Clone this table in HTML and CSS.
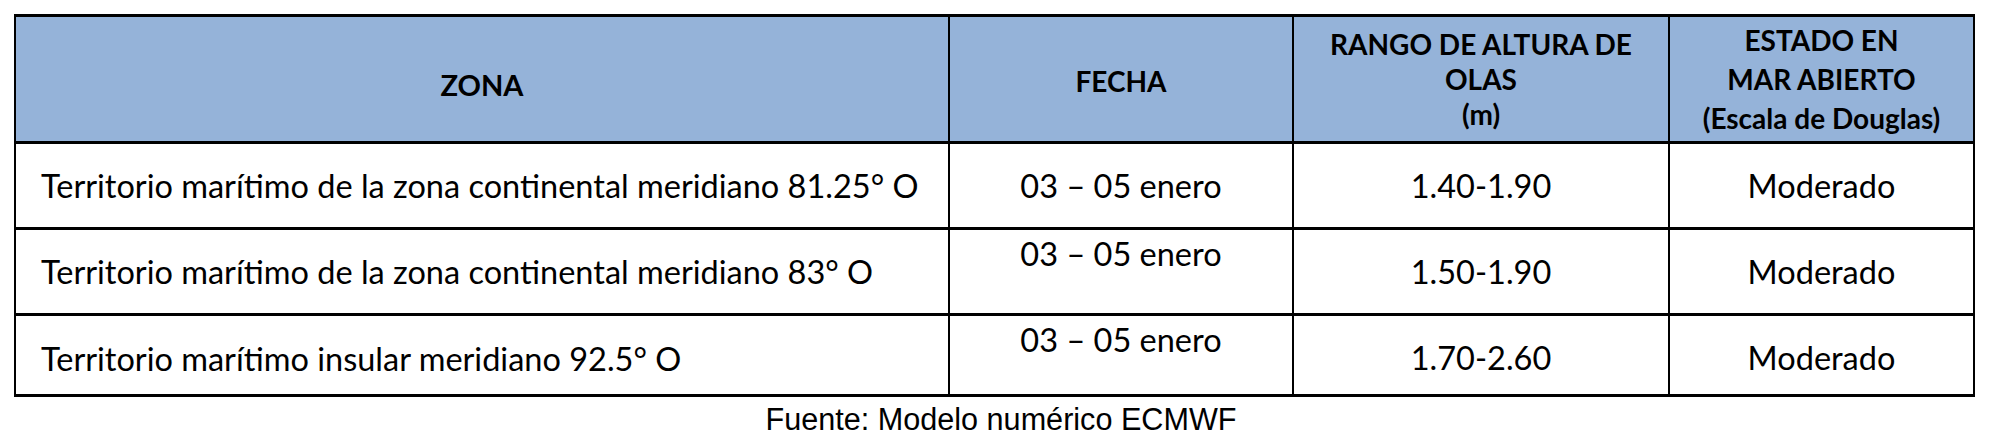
FILE: index.html
```html
<!DOCTYPE html>
<html lang="es">
<head>
<meta charset="utf-8">
<title>Estado del mar</title>
<link rel="stylesheet" href="styles.css">
</head>
<body>
<div class="sheet">
  <div class="grid" role="table">
    <div class="cell head zona-h">ZONA</div>
    <div class="cell head fecha-h">FECHA</div>
    <div class="cell head">RANGO DE ALTURA DE<br>OLAS<br>(m)</div>
    <div class="cell head estado-h">ESTADO EN<br>MAR ABIERTO<br>(Escala de Douglas)</div>

    <div class="cell zone">Territorio marítimo de la zona continental meridiano 81.25° O</div>
    <div class="cell">03 – 05 enero</div>
    <div class="cell">1.40-1.90</div>
    <div class="cell">Moderado</div>

    <div class="cell zone">Territorio marítimo de la zona continental meridiano 83° O</div>
    <div class="cell top">03 – 05 enero</div>
    <div class="cell">1.50-1.90</div>
    <div class="cell">Moderado</div>

    <div class="cell zone last">Territorio marítimo insular meridiano 92.5° O</div>
    <div class="cell top">03 – 05 enero</div>
    <div class="cell last">1.70-2.60</div>
    <div class="cell last">Moderado</div>
  </div>
  <p class="source">Fuente: Modelo numérico ECMWF</p>
</div>
</body>
</html>
```
FILE: styles.css
```css
html, body {
  margin: 0;
  padding: 0;
  background: #ffffff;
}

body {
  width: 2002px;
  color: #000000;
}

.sheet {
  padding-top: 14px;
}

.grid {
  display: grid;
  grid-template-columns: 934px 344px 376px 305px;
  grid-template-rows: 127px 86px 86px 81px;
  margin-left: 14px;
  width: 1961px;
  box-sizing: border-box;
  border-left: 2px solid #000;
  border-top: 3px solid #000;
  font-family: Lato, "Liberation Sans", sans-serif;
  font-size: 32.5px;
  line-height: 39px;
}

.cell {
  box-sizing: border-box;
  border-right: 2px solid #000;
  border-bottom: 3px solid #000;
  display: flex;
  align-items: center;
  justify-content: center;
  text-align: center;
}

.head {
  background: #95b3d9;
  font-weight: 700;
  font-size: 28px;
  line-height: 35px;
}

.zona-h {
  padding-top: 10px;
  font-size: 29px;
}

.fecha-h {
  padding-top: 4px;
}

.estado-h {
  line-height: 39px;
}

.zone {
  justify-content: flex-start;
  text-align: left;
  padding-left: 25px;
}

.top {
  align-items: flex-start;
  padding-top: 4px;
}

.last {
  padding-top: 5px;
}

.zone.last {
  padding-top: 6px;
}

.source {
  margin: 5px 0 0;
  text-align: center;
  font-family: "Liberation Sans", Arial, sans-serif;
  font-size: 30.6px;
  line-height: 34px;
}
```
